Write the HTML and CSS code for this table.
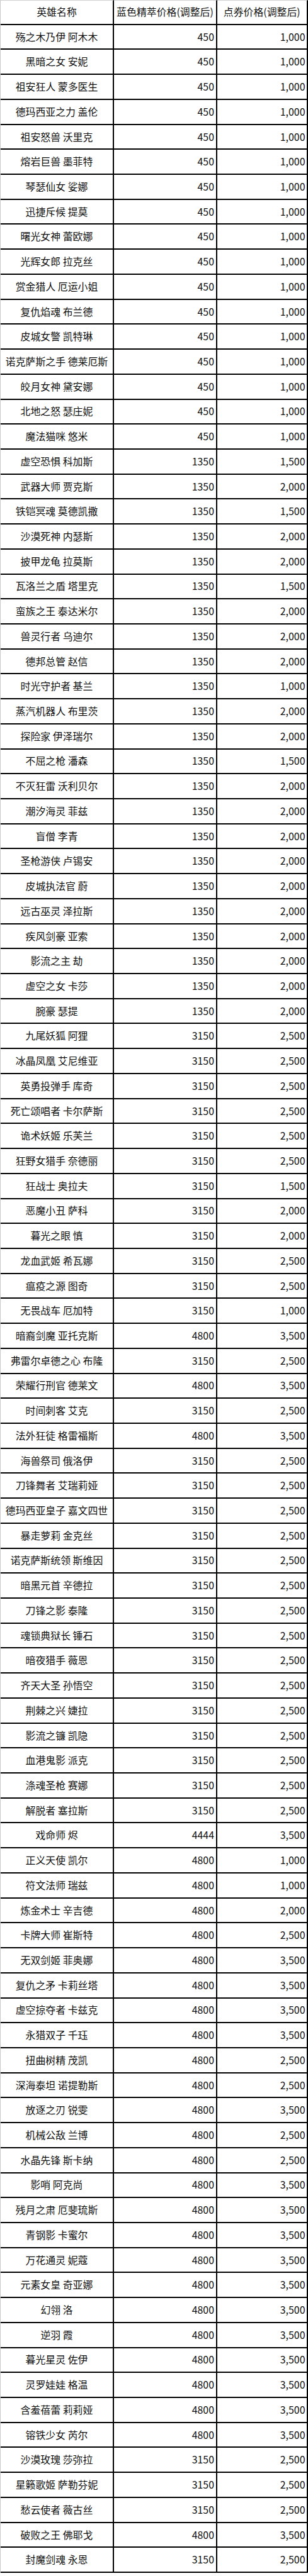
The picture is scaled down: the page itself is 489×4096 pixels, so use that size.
FILE: index.html
```html
<!DOCTYPE html>
<html lang="zh-CN">
<head>
<meta charset="utf-8">
<title>英雄价格表</title>
<link rel="stylesheet" href="styles.css">
</head>
<body>
<div class="sheet">
<div class="c h name">英雄名称</div><div class="c h">蓝色精萃价格(调整后)</div><div class="c h last">点券价格(调整后)</div>
<div class="c name">殇之木乃伊 阿木木</div><div class="c num">450</div><div class="c num last">1,000</div>
<div class="c name">黑暗之女 安妮</div><div class="c num">450</div><div class="c num last">1,000</div>
<div class="c name">祖安狂人 蒙多医生</div><div class="c num">450</div><div class="c num last">1,000</div>
<div class="c name">德玛西亚之力 盖伦</div><div class="c num">450</div><div class="c num last">1,000</div>
<div class="c name">祖安怒兽 沃里克</div><div class="c num">450</div><div class="c num last">1,000</div>
<div class="c name">熔岩巨兽 墨菲特</div><div class="c num">450</div><div class="c num last">1,000</div>
<div class="c name">琴瑟仙女 娑娜</div><div class="c num">450</div><div class="c num last">1,000</div>
<div class="c name">迅捷斥候 提莫</div><div class="c num">450</div><div class="c num last">1,000</div>
<div class="c name">曙光女神 蕾欧娜</div><div class="c num">450</div><div class="c num last">1,000</div>
<div class="c name">光辉女郎 拉克丝</div><div class="c num">450</div><div class="c num last">1,000</div>
<div class="c name">赏金猎人 厄运小姐</div><div class="c num">450</div><div class="c num last">1,000</div>
<div class="c name">复仇焰魂 布兰德</div><div class="c num">450</div><div class="c num last">1,000</div>
<div class="c name">皮城女警 凯特琳</div><div class="c num">450</div><div class="c num last">1,000</div>
<div class="c name">诺克萨斯之手 德莱厄斯</div><div class="c num">450</div><div class="c num last">1,000</div>
<div class="c name">皎月女神 黛安娜</div><div class="c num">450</div><div class="c num last">1,000</div>
<div class="c name">北地之怒 瑟庄妮</div><div class="c num">450</div><div class="c num last">1,000</div>
<div class="c name">魔法猫咪 悠米</div><div class="c num">450</div><div class="c num last">1,000</div>
<div class="c name">虚空恐惧 科加斯</div><div class="c num">1350</div><div class="c num last">1,500</div>
<div class="c name">武器大师 贾克斯</div><div class="c num">1350</div><div class="c num last">2,000</div>
<div class="c name">铁铠冥魂 莫德凯撒</div><div class="c num">1350</div><div class="c num last">1,500</div>
<div class="c name">沙漠死神 内瑟斯</div><div class="c num">1350</div><div class="c num last">2,000</div>
<div class="c name">披甲龙龟 拉莫斯</div><div class="c num">1350</div><div class="c num last">2,000</div>
<div class="c name">瓦洛兰之盾 塔里克</div><div class="c num">1350</div><div class="c num last">1,500</div>
<div class="c name">蛮族之王 泰达米尔</div><div class="c num">1350</div><div class="c num last">2,000</div>
<div class="c name">兽灵行者 乌迪尔</div><div class="c num">1350</div><div class="c num last">2,000</div>
<div class="c name">德邦总管 赵信</div><div class="c num">1350</div><div class="c num last">2,000</div>
<div class="c name">时光守护者 基兰</div><div class="c num">1350</div><div class="c num last">1,000</div>
<div class="c name">蒸汽机器人 布里茨</div><div class="c num">1350</div><div class="c num last">2,000</div>
<div class="c name">探险家 伊泽瑞尔</div><div class="c num">1350</div><div class="c num last">2,000</div>
<div class="c name">不屈之枪 潘森</div><div class="c num">1350</div><div class="c num last">1,500</div>
<div class="c name">不灭狂雷 沃利贝尔</div><div class="c num">1350</div><div class="c num last">2,000</div>
<div class="c name">潮汐海灵 菲兹</div><div class="c num">1350</div><div class="c num last">2,000</div>
<div class="c name">盲僧 李青</div><div class="c num">1350</div><div class="c num last">2,000</div>
<div class="c name">圣枪游侠 卢锡安</div><div class="c num">1350</div><div class="c num last">2,000</div>
<div class="c name">皮城执法官 蔚</div><div class="c num">1350</div><div class="c num last">2,000</div>
<div class="c name">远古巫灵 泽拉斯</div><div class="c num">1350</div><div class="c num last">2,000</div>
<div class="c name">疾风剑豪 亚索</div><div class="c num">1350</div><div class="c num last">2,000</div>
<div class="c name">影流之主 劫</div><div class="c num">1350</div><div class="c num last">2,000</div>
<div class="c name">虚空之女 卡莎</div><div class="c num">1350</div><div class="c num last">2,000</div>
<div class="c name">腕豪 瑟提</div><div class="c num">1350</div><div class="c num last">2,000</div>
<div class="c name">九尾妖狐 阿狸</div><div class="c num">3150</div><div class="c num last">2,500</div>
<div class="c name">冰晶凤凰 艾尼维亚</div><div class="c num">3150</div><div class="c num last">2,500</div>
<div class="c name">英勇投弹手 库奇</div><div class="c num">3150</div><div class="c num last">2,500</div>
<div class="c name">死亡颂唱者 卡尔萨斯</div><div class="c num">3150</div><div class="c num last">2,500</div>
<div class="c name">诡术妖姬 乐芙兰</div><div class="c num">3150</div><div class="c num last">2,500</div>
<div class="c name">狂野女猎手 奈德丽</div><div class="c num">3150</div><div class="c num last">2,500</div>
<div class="c name">狂战士 奥拉夫</div><div class="c num">3150</div><div class="c num last">1,500</div>
<div class="c name">恶魔小丑 萨科</div><div class="c num">3150</div><div class="c num last">2,000</div>
<div class="c name">暮光之眼 慎</div><div class="c num">3150</div><div class="c num last">2,000</div>
<div class="c name">龙血武姬 希瓦娜</div><div class="c num">3150</div><div class="c num last">2,500</div>
<div class="c name">瘟疫之源 图奇</div><div class="c num">3150</div><div class="c num last">2,500</div>
<div class="c name">无畏战车 厄加特</div><div class="c num">3150</div><div class="c num last">1,000</div>
<div class="c name">暗裔剑魔 亚托克斯</div><div class="c num">4800</div><div class="c num last">3,500</div>
<div class="c name">弗雷尔卓德之心 布隆</div><div class="c num">3150</div><div class="c num last">2,500</div>
<div class="c name">荣耀行刑官 德莱文</div><div class="c num">4800</div><div class="c num last">3,500</div>
<div class="c name">时间刺客 艾克</div><div class="c num">3150</div><div class="c num last">2,500</div>
<div class="c name">法外狂徒 格雷福斯</div><div class="c num">4800</div><div class="c num last">3,500</div>
<div class="c name">海兽祭司 俄洛伊</div><div class="c num">3150</div><div class="c num last">2,500</div>
<div class="c name">刀锋舞者 艾瑞莉娅</div><div class="c num">3150</div><div class="c num last">2,500</div>
<div class="c name">德玛西亚皇子 嘉文四世</div><div class="c num">3150</div><div class="c num last">2,500</div>
<div class="c name">暴走萝莉 金克丝</div><div class="c num">3150</div><div class="c num last">2,500</div>
<div class="c name">诺克萨斯统领 斯维因</div><div class="c num">3150</div><div class="c num last">2,500</div>
<div class="c name">暗黑元首 辛德拉</div><div class="c num">3150</div><div class="c num last">2,500</div>
<div class="c name">刀锋之影 泰隆</div><div class="c num">3150</div><div class="c num last">2,500</div>
<div class="c name">魂锁典狱长 锤石</div><div class="c num">3150</div><div class="c num last">2,500</div>
<div class="c name">暗夜猎手 薇恩</div><div class="c num">3150</div><div class="c num last">2,500</div>
<div class="c name">齐天大圣 孙悟空</div><div class="c num">3150</div><div class="c num last">2,500</div>
<div class="c name">荆棘之兴 婕拉</div><div class="c num">3150</div><div class="c num last">2,500</div>
<div class="c name">影流之镰 凯隐</div><div class="c num">3150</div><div class="c num last">2,500</div>
<div class="c name">血港鬼影 派克</div><div class="c num">3150</div><div class="c num last">2,500</div>
<div class="c name">涤魂圣枪 赛娜</div><div class="c num">3150</div><div class="c num last">2,500</div>
<div class="c name">解脱者 塞拉斯</div><div class="c num">3150</div><div class="c num last">2,500</div>
<div class="c name">戏命师 烬</div><div class="c num">4444</div><div class="c num last">3,500</div>
<div class="c name">正义天使 凯尔</div><div class="c num">4800</div><div class="c num last">1,000</div>
<div class="c name">符文法师 瑞兹</div><div class="c num">4800</div><div class="c num last">1,000</div>
<div class="c name">炼金术士 辛吉德</div><div class="c num">4800</div><div class="c num last">2,000</div>
<div class="c name">卡牌大师 崔斯特</div><div class="c num">4800</div><div class="c num last">2,500</div>
<div class="c name">无双剑姬 菲奥娜</div><div class="c num">4800</div><div class="c num last">3,500</div>
<div class="c name">复仇之矛 卡莉丝塔</div><div class="c num">4800</div><div class="c num last">3,500</div>
<div class="c name">虚空掠夺者 卡兹克</div><div class="c num">4800</div><div class="c num last">3,500</div>
<div class="c name">永猎双子 千珏</div><div class="c num">4800</div><div class="c num last">3,500</div>
<div class="c name">扭曲树精 茂凯</div><div class="c num">4800</div><div class="c num last">2,500</div>
<div class="c name">深海泰坦 诺提勒斯</div><div class="c num">4800</div><div class="c num last">2,500</div>
<div class="c name">放逐之刃 锐雯</div><div class="c num">4800</div><div class="c num last">3,500</div>
<div class="c name">机械公敌 兰博</div><div class="c num">4800</div><div class="c num last">2,500</div>
<div class="c name">水晶先锋 斯卡纳</div><div class="c num">4800</div><div class="c num last">2,500</div>
<div class="c name">影哨 阿克尚</div><div class="c num">4800</div><div class="c num last">3,500</div>
<div class="c name">残月之肃 厄斐琉斯</div><div class="c num">4800</div><div class="c num last">3,500</div>
<div class="c name">青钢影 卡蜜尔</div><div class="c num">4800</div><div class="c num last">3,500</div>
<div class="c name">万花通灵 妮蔻</div><div class="c num">4800</div><div class="c num last">3,500</div>
<div class="c name">元素女皇 奇亚娜</div><div class="c num">4800</div><div class="c num last">3,500</div>
<div class="c name">幻翎 洛</div><div class="c num">4800</div><div class="c num last">3,500</div>
<div class="c name">逆羽 霞</div><div class="c num">4800</div><div class="c num last">3,500</div>
<div class="c name">暮光星灵 佐伊</div><div class="c num">4800</div><div class="c num last">3,500</div>
<div class="c name">灵罗娃娃 格温</div><div class="c num">4800</div><div class="c num last">3,500</div>
<div class="c name">含羞蓓蕾 莉莉娅</div><div class="c num">4800</div><div class="c num last">3,500</div>
<div class="c name">镕铁少女 芮尔</div><div class="c num">4800</div><div class="c num last">3,500</div>
<div class="c name">沙漠玫瑰 莎弥拉</div><div class="c num">3150</div><div class="c num last">2,500</div>
<div class="c name">星籁歌姬 萨勒芬妮</div><div class="c num">3150</div><div class="c num last">2,500</div>
<div class="c name">愁云使者 薇古丝</div><div class="c num">3150</div><div class="c num last">2,500</div>
<div class="c name">破败之王 佛耶戈</div><div class="c num">4800</div><div class="c num last">3,500</div>
<div class="c name">封魔剑魂 永恩</div><div class="c num">3150</div><div class="c num last">2,500</div>
</div>
</body>
</html>
```
FILE: styles.css
```css
html, body {
  margin: 0;
  padding: 0;
  background: #ffffff;
}

.sheet {
  display: grid;
  grid-template-columns: 180px 164px 143.5px;
  grid-auto-rows: 39.72px;
  width: fit-content;
  border-left: 1px solid #c8c8c8;
  font-family: "Noto Sans CJK SC", "Microsoft YaHei", sans-serif;
  font-size: 15.9px;
  color: #111111;
}

.c {
  box-sizing: border-box;
  display: flex;
  align-items: center;
  justify-content: center;
  border-right: 2px solid #000000;
  border-bottom: 2px solid #000000;
  white-space: nowrap;
  overflow: hidden;
  line-height: 1;
}

.h {
  border-top: 1px solid #d0d0d0;
}

.num {
  justify-content: flex-end;
  padding-right: 3px;
}

.num.last {
  padding-right: 2px;
}
```
